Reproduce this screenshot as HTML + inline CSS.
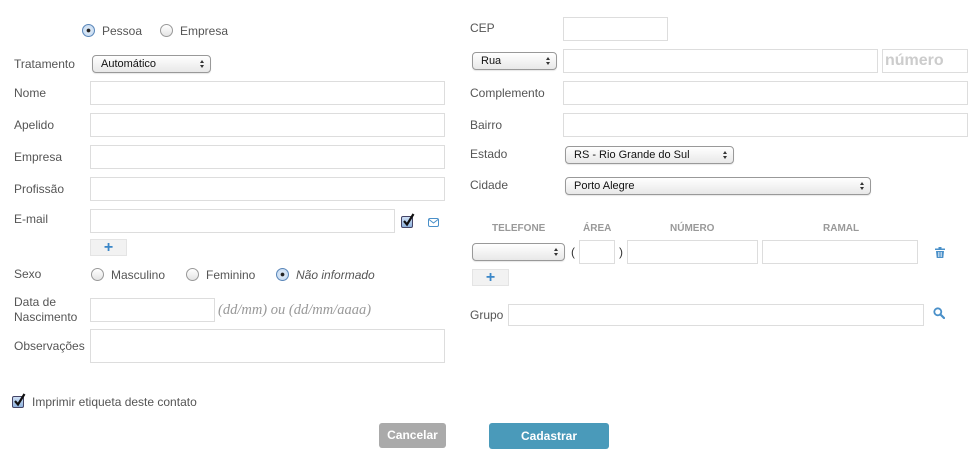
<!DOCTYPE html>
<html><head><meta charset="utf-8"><style>
*{box-sizing:border-box;margin:0;padding:0}
body{width:978px;height:462px;background:#fff;font-family:"Liberation Sans",sans-serif;font-size:12px;color:#555;position:relative;overflow:hidden}
.a{position:absolute}
.l{position:absolute;line-height:14px;white-space:nowrap}
.in{position:absolute;border:1px solid #ddd;background:#fff}
.sel{position:absolute;border:1px solid #999;border-radius:4px;background:linear-gradient(#fff,#e8e8e8);font-size:11px;color:#111;padding-left:8px;line-height:16px;box-shadow:0 1px 1px rgba(0,0,0,.1)}
.sel:after{content:"";position:absolute;right:6px;top:4px;width:0;height:0;border-left:2.5px solid transparent;border-right:2.5px solid transparent;border-bottom:3px solid #333}
.sel:before{content:"";position:absolute;right:6px;top:9px;width:0;height:0;border-left:2.5px solid transparent;border-right:2.5px solid transparent;border-top:3px solid #333}
.r{position:absolute;width:13px;height:13px;border-radius:50%;border:1px solid #999;background:linear-gradient(#fff,#e4e4e4)}
.r.on{border-color:#5a86b8;background:radial-gradient(circle,#222 0 1.6px,#dce9f7 2.2px,#b8d2ee 100%)}
.plus{position:absolute;width:37px;height:17px;background:#f2f2f2;border:1px solid #e4e4e4;color:#3b87c8;font-weight:bold;font-size:16px;text-align:center;line-height:15px}
.cb{position:absolute;width:12px;height:12px;border:1px solid #446;border-radius:2px;background:linear-gradient(#cfe0f5,#8fb3dd)}
.cb svg{position:absolute;left:0;top:-4px}
.h{position:absolute;font-size:10px;font-weight:bold;color:#999;top:223px}
</style></head><body>
<div class="r on" style="left:82px;top:24px"></div><div class="l" style="left:102px;top:24px">Pessoa</div>
<div class="r" style="left:160px;top:24px"></div><div class="l" style="left:180px;top:24px">Empresa</div>

<div class="l" style="left:14px;top:57px">Tratamento</div>
<div class="sel" style="left:92px;top:55px;width:119px;height:18px">Automático</div>
<div class="l" style="left:14px;top:86px">Nome</div><div class="in" style="left:90px;top:81px;width:355px;height:24px"></div>
<div class="l" style="left:14px;top:118px">Apelido</div><div class="in" style="left:90px;top:113px;width:355px;height:24px"></div>
<div class="l" style="left:14px;top:150px">Empresa</div><div class="in" style="left:90px;top:145px;width:355px;height:24px"></div>
<div class="l" style="left:14px;top:182px">Profissão</div><div class="in" style="left:90px;top:177px;width:355px;height:24px"></div>
<div class="l" style="left:14px;top:212px">E-mail</div><div class="in" style="left:90px;top:209px;width:305px;height:24px"></div>
<div class="cb" style="left:401px;top:216px"><svg width="13" height="14" viewBox="0 0 13 14"><path d="M2 8L5 11.5L11.5 1" fill="none" stroke="#111" stroke-width="2.2"/></svg></div>
<svg class="a" style="left:428px;top:218px" width="11" height="9" viewBox="0 0 11 9"><rect x="0.5" y="0.5" width="10" height="8" rx="1.5" fill="none" stroke="#4a90c9"/><path d="M1 1.5L5.5 5L10 1.5" fill="none" stroke="#4a90c9"/></svg>
<div class="plus" style="left:90px;top:239px">+</div>

<div class="l" style="left:14px;top:267px">Sexo</div>
<div class="r" style="left:91px;top:268px"></div><div class="l" style="left:111px;top:268px">Masculino</div>
<div class="r" style="left:186px;top:268px"></div><div class="l" style="left:206px;top:268px">Feminino</div>
<div class="r on" style="left:276px;top:268px"></div><div class="l" style="left:296px;top:268px;font-style:italic">Não informado</div>
<div class="l" style="left:14px;top:295px">Data de</div><div class="l" style="left:14px;top:310px">Nascimento</div>
<div class="in" style="left:90px;top:298px;width:125px;height:24px"></div>
<div class="l" style="left:218px;top:303px;font-family:'Liberation Serif',serif;font-style:italic;color:#999;font-size:14.5px">(dd/mm) ou (dd/mm/aaaa)</div>
<div class="l" style="left:14px;top:339px">Observações</div>
<div class="in" style="left:90px;top:329px;width:355px;height:34px"></div>
<div class="cb" style="left:12px;top:396px"><svg width="13" height="14" viewBox="0 0 13 14"><path d="M2 8L5 11.5L11.5 1" fill="none" stroke="#111" stroke-width="2.2"/></svg></div><div class="l" style="left:32px;top:395px">Imprimir etiqueta deste contato</div>
<div class="a" style="left:379px;top:423px;width:67px;height:25px;background:#aaa;border-radius:3px;color:#fff;font-weight:bold;text-align:center;line-height:25px;font-size:12px">Cancelar</div>
<div class="a" style="left:489px;top:423px;width:120px;height:26px;background:#4a9aba;border-radius:3px;color:#fff;font-weight:bold;text-align:center;line-height:26px;font-size:12px">Cadastrar</div>

<div class="l" style="left:470px;top:21px">CEP</div><div class="in" style="left:563px;top:17px;width:105px;height:24px"></div>
<div class="sel" style="left:472px;top:52px;width:85px;height:18px">Rua</div>
<div class="in" style="left:563px;top:49px;width:315px;height:24px"></div>
<div class="in" style="left:882px;top:49px;width:86px;height:24px;color:#ccc;font-weight:bold;font-size:16px;line-height:22px;padding-left:2px">número</div>
<div class="l" style="left:470px;top:86px">Complemento</div><div class="in" style="left:563px;top:81px;width:405px;height:24px"></div>
<div class="l" style="left:470px;top:118px">Bairro</div><div class="in" style="left:563px;top:113px;width:405px;height:24px"></div>
<div class="l" style="left:470px;top:147px">Estado</div><div class="sel" style="left:565px;top:146px;width:169px;height:18px">RS - Rio Grande do Sul</div>
<div class="l" style="left:470px;top:178px">Cidade</div><div class="sel" style="left:565px;top:177px;width:306px;height:18px">Porto Alegre</div>

<div class="h" style="left:492px">TELEFONE</div><div class="h" style="left:583px">ÁREA</div><div class="h" style="left:670px">NÚMERO</div><div class="h" style="left:823px">RAMAL</div>
<div class="sel" style="left:472px;top:243px;width:93px;height:18px"></div>
<div class="l" style="left:571px;top:245px;color:#333">(</div>
<div class="in" style="left:579px;top:240px;width:36px;height:24px"></div>
<div class="l" style="left:619px;top:245px;color:#333">)</div>
<div class="in" style="left:627px;top:240px;width:131px;height:24px"></div>
<div class="in" style="left:762px;top:240px;width:156px;height:24px"></div>
<svg class="a" style="left:935px;top:247px" width="10" height="11" viewBox="0 0 10 11"><rect x="0" y="1.5" width="10" height="1.5" fill="#4a90c9"/><rect x="3.5" y="0" width="3" height="2" fill="#4a90c9"/><path d="M1 4h8l-.7 7H1.7z" fill="#4a90c9"/><path d="M3.5 5v5M5 5v5M6.5 5v5" stroke="#fff" stroke-width=".6"/></svg>
<div class="plus" style="left:472px;top:269px">+</div>
<div class="l" style="left:470px;top:308px">Grupo</div><div class="in" style="left:508px;top:304px;width:416px;height:22px"></div>
<svg class="a" style="left:933px;top:307px" width="12" height="12" viewBox="0 0 12 12"><circle cx="4.8" cy="4.8" r="3.5" fill="none" stroke="#4a90c9" stroke-width="1.8"/><path d="M7.5 7.5L11 11" stroke="#4a90c9" stroke-width="2.2" stroke-linecap="round"/></svg>
</body></html>
